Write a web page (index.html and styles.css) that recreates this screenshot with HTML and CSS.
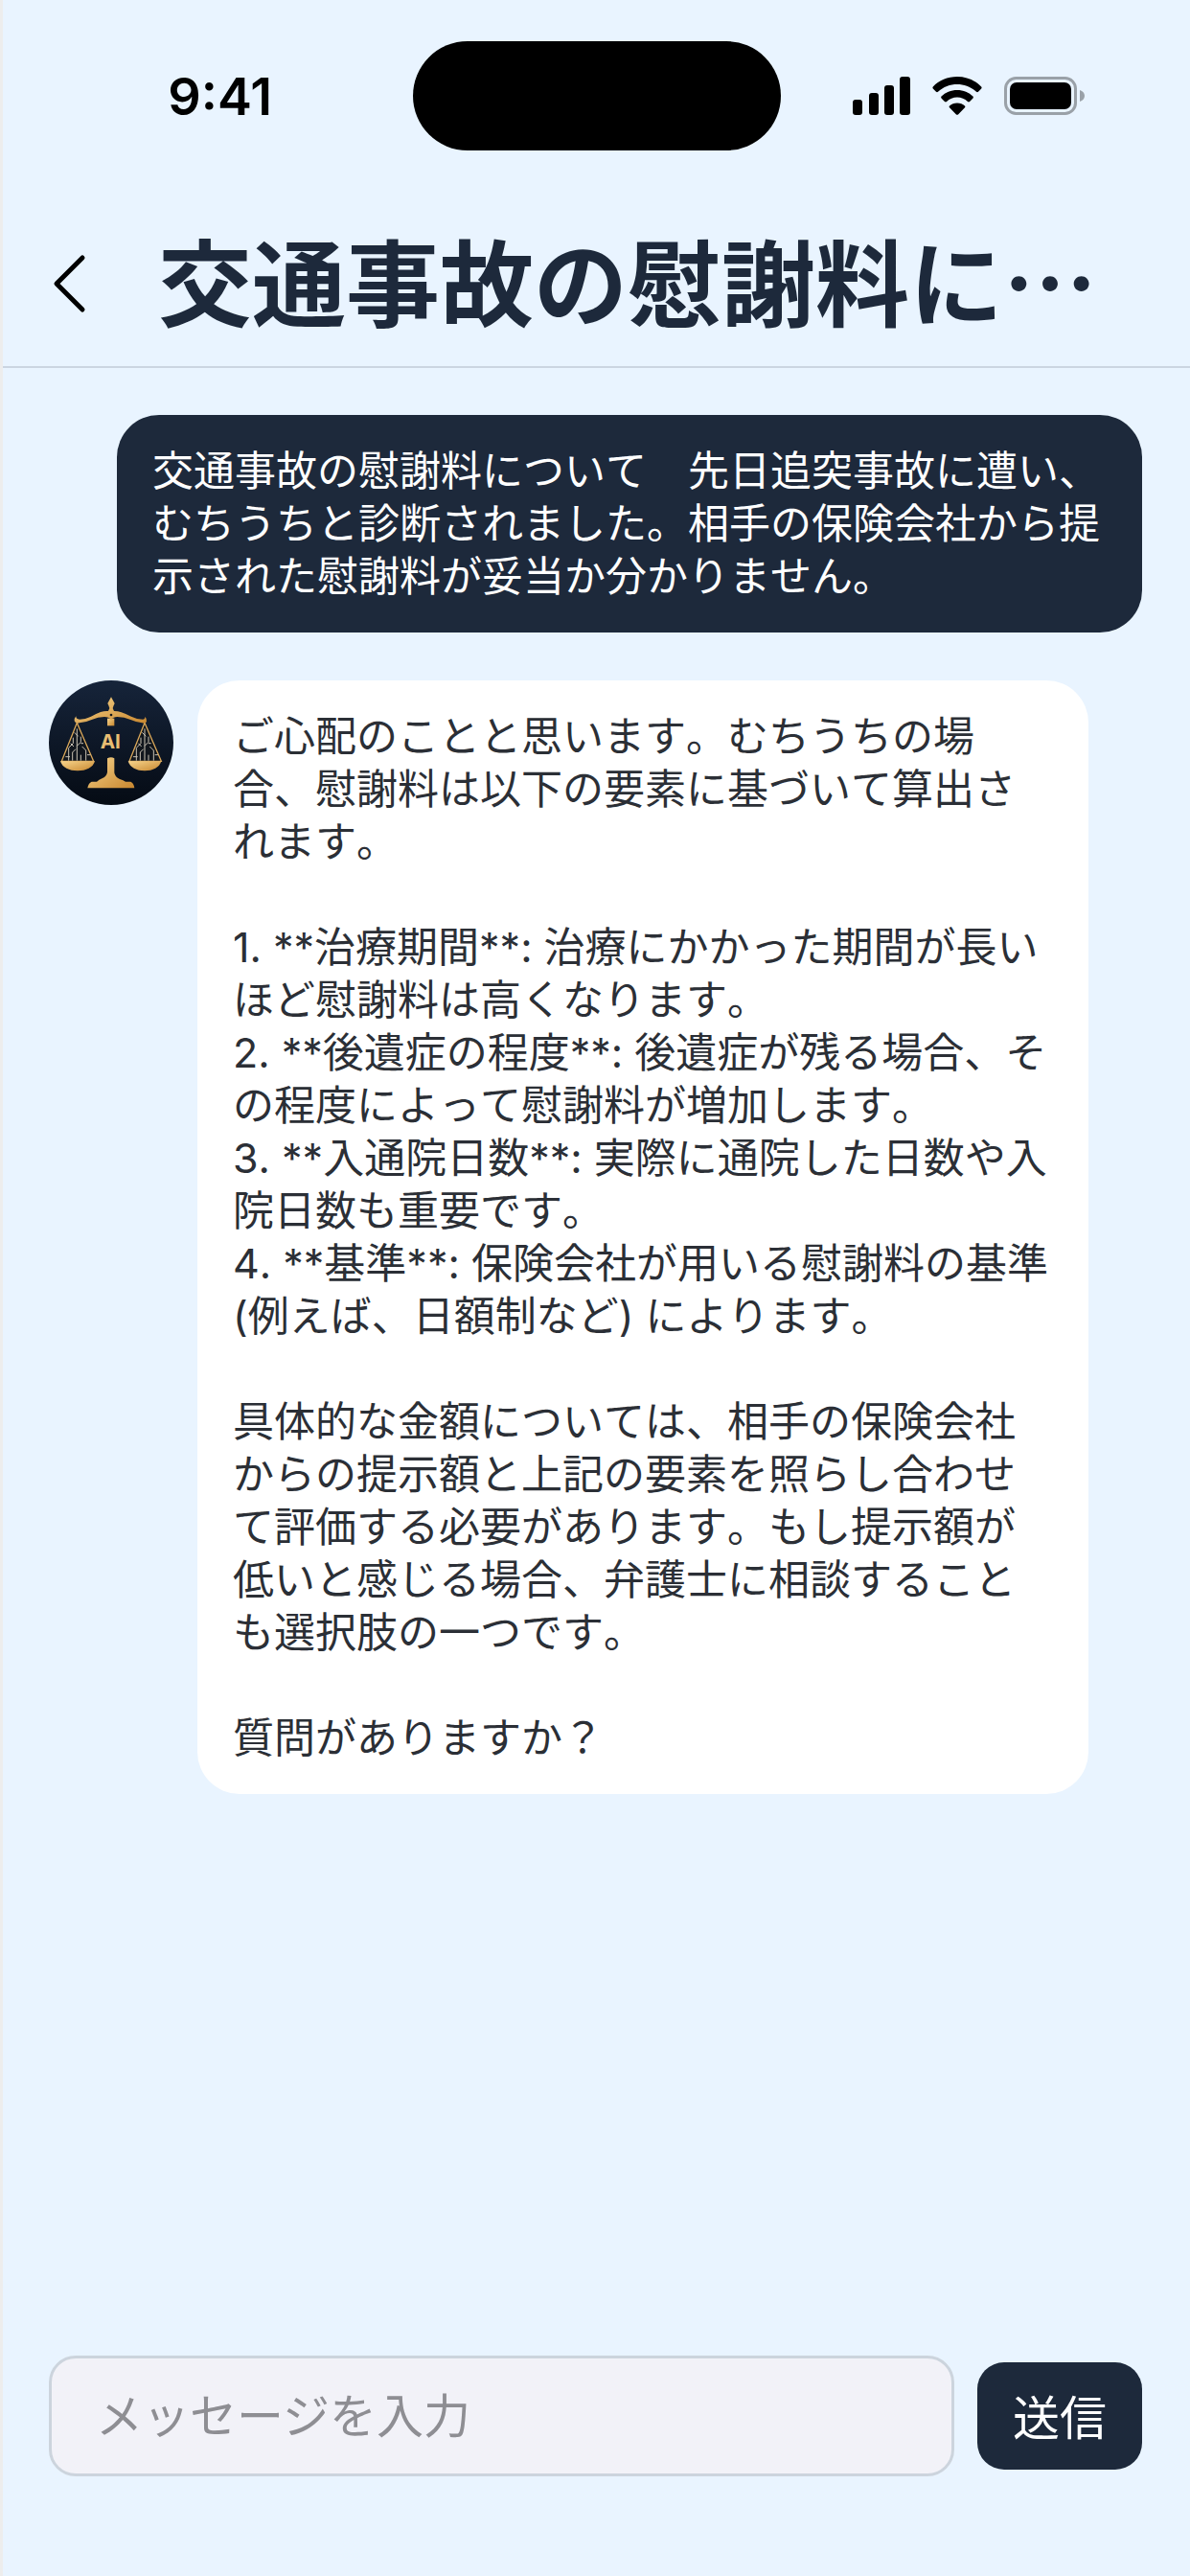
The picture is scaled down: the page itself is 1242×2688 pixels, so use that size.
FILE: index.html
```
<!DOCTYPE html>
<html lang="ja">
<head>
  <meta charset="UTF-8">
  <meta name="viewport" content="width=device-width, initial-scale=1.0">
  <title>交通事故の慰謝料について</title>
  <link rel="stylesheet" href="styles.css">
</head>
<body>
  <div class="app">
    <!-- Status bar -->
    <div class="status-bar">
      <div class="status-time">9:41</div>
      <div class="island"></div>
      <div class="status-icons">
        <svg class="icon-signal" viewBox="0 0 60 40" aria-hidden="true">
          <rect x="0" y="24" width="10" height="16" rx="3"/>
          <rect x="17" y="17" width="10" height="23" rx="3"/>
          <rect x="33" y="9" width="10" height="31" rx="3"/>
          <rect x="49" y="0" width="11" height="40" rx="3"/>
        </svg>
        <svg class="icon-wifi" viewBox="0 0 52 40" aria-hidden="true">
          <path d="M26 0C16 0 7 4 .8 10.400Q0 11.500 .8 12.500L4 15.800Q5 16.600 6 15.800C11.500 10.600 18.500 8 26 8S40.500 10.600 46 15.800Q47 16.600 48 15.800L51.200 12.500Q52 11.500 51.200 10.400C45 4 36 0 26 0Z"/>
          <path d="M26 14C19.500 14 13.700 16.500 9.500 20.600Q8.700 21.600 9.500 22.500L13 26Q14 26.800 15 26C18 23.200 21.800 21.600 26 21.600S34 23.200 37 26Q38 26.800 39 26L42.500 22.500Q43.300 21.600 42.500 20.600C38.300 16.500 32.500 14 26 14Z"/>
          <path d="M26 27.500C22.800 27.500 20 28.600 18 30.400Q17.200 31.400 18 32.200L25 39.400Q26 40.200 27 39.400L34 32.200Q34.800 31.400 34 30.400C32 28.600 29.200 27.500 26 27.500Z"/>
        </svg>
        <svg class="icon-battery" viewBox="0 0 86 40" aria-hidden="true">
          <rect x="1.500" y="1.500" width="73" height="37" rx="11" fill="none" stroke="#9aa1a8" stroke-width="3"/>
          <rect x="6" y="6" width="64" height="28" rx="7"/>
          <path d="M79 14C82 15 84 17 84 20S82 25 79 26Z" fill="#9aa1a8"/>
        </svg>
      </div>
    </div>

    <!-- Header -->
    <header class="header">
      <button class="back" aria-label="戻る">
        <svg viewBox="0 0 36 64" aria-hidden="true">
          <path d="M31 5L4 32L31 59"/>
        </svg>
      </button>
      <h1>交通事故の慰謝料に…</h1>
    </header>

    <!-- Messages -->
    <main class="messages">
      <div class="bubble bubble-user">交通事故の慰謝料について　先日追突事故に遭い、むちうちと診断されました。相手の保険会社から提示された慰謝料が妥当か分かりません。</div>

      <div class="row-ai">
        <svg class="avatar" viewBox="36 29 390 390" role="img" aria-label="AI">
          <defs>
            <linearGradient id="sky" x1="0" y1="0" x2="0" y2="1">
              <stop offset="0" stop-color="#16243a"/>
              <stop offset="1" stop-color="#050b14"/>
            </linearGradient>
            <linearGradient id="gold" x1="0" y1="0" x2="1" y2="1">
              <stop offset="0" stop-color="#f6d48c"/>
              <stop offset="1" stop-color="#c8872f"/>
            </linearGradient>
          </defs>
          <circle cx="231" cy="224" r="195" fill="url(#sky)"/>
          <!-- pans with circuit pattern -->
          <g fill="#11161d" stroke="#d9a75a" stroke-width="4">
            <path d="M124 162L76 282H176Z"/>
            <path d="M336 162L288 282H388Z"/>
          </g>
          <g fill="none" stroke="#c9c2b4" stroke-width="3">
            <path d="M124 180V280M112 208V226L98 240V280M136 205V222L124 234M140 236L152 248V280M110 280V254L120 244M136 280V262M88 268H102M116 192L128 204M104 226L114 236M144 226H136M156 262H166"/>
            <path d="M336 180V280M324 208V226L310 240V280M348 205V222L336 234M352 236L364 248V280M322 280V254L332 244M348 280V262M300 268H314M328 192L340 204M316 226L326 236M356 226H348M368 262H378"/>
          </g>
          <g fill="url(#gold)">
            <path d="M72 282H180C174 302 153 312 126 312S78 302 72 282Z"/>
            <path d="M284 282H388C382 302 362 312 336 312S290 302 284 282Z"/>
            <path d="M219 273Q231 266 241 273V318Q243 332 258 338Q270 342 276 346H292Q302 350 304 366H157Q160 350 170 346H186Q192 340 204 335Q217 329 219 316Z"/>
            <path d="M219 148H241V171H219Z"/>
            <path d="M231 81Q238 94 242 101Q238 108 236 116L240 125Q252 125 263 129Q280 135 294 142Q312 151 330 151Q338 150 337 142Q344 150 342 158Q338 166 328 162Q310 160 292 152Q272 143 250 143Q238 143 231 152Q224 143 210 143Q190 143 170 152Q150 161 132 162Q120 166 116 156Q115 148 121 141Q121 151 132 151Q150 151 168 142Q182 134 198 128Q210 124 222 125L226 116Q224 108 220 101Q225 92 231 81Z"/>
          </g>
          <circle cx="231" cy="137" r="4" fill="#11161d"/>
          <text class="avatar-text" x="229" y="242" text-anchor="middle">AI</text>
        </svg>
        <div class="bubble bubble-ai">ご心配のことと思います。むちうちの場合、慰謝料は以下の要素に基づいて算出されます。

1. **治療期間**: 治療にかかった期間が長いほど慰謝料は高くなります。
2. **後遺症の程度**: 後遺症が残る場合、その程度によって慰謝料が増加します。
3. **入通院日数**: 実際に通院した日数や入院日数も重要です。
4. **基準**: 保険会社が用いる慰謝料の基準 (例えば、日額制など) によります。

具体的な金額については、相手の保険会社からの提示額と上記の要素を照らし合わせて評価する必要があります。もし提示額が低いと感じる場合、弁護士に相談することも選択肢の一つです。

質問がありますか？</div>
      </div>
    </main>

    <!-- Message form -->
    <form class="composer">
      <input type="text" id="message" aria-label="メッセージ" placeholder="メッセージを入力">
      <button type="button" class="send">送信</button>
    </form>
  </div>
</body>
</html>
```
FILE: styles.css
```
* {
  box-sizing: border-box;
}
body {
  margin: 0;
  background: #e9f4ff;
  font-family: Inter, "Noto Sans CJK JP", sans-serif;
  color: #2b2f36;
}
.app {
  min-height: 100vh;
  display: flex;
  flex-direction: column;
  border-left: 3px solid #ededed;
}
svg {
  display: block;
}

/* Status bar */
.status-bar {
  display: grid;
  grid-template-columns: 1fr 384px 1fr;
  align-items: center;
  padding: 43px 0 42px;
}
.status-time {
  padding-left: 26px;
  text-align: center;
  font-size: 54px;
  font-weight: 600;
  color: #000;
}
.island {
  height: 114px;
  border-radius: 57px;
  background: #000;
}
.status-icons {
  display: flex;
  justify-content: flex-end;
  gap: 23px;
  padding-right: 108px;
}
.status-icons svg {
  height: 40px;
}

/* Header */
.header {
  display: flex;
  align-items: center;
  gap: 74px;
  height: 185px;
  padding: 10px 48px 0 52px;
  border-bottom: 2px solid #cbd5e1;
}
.back {
  padding: 0;
  border: 0;
  background: none;
  cursor: pointer;
}
.back svg {
  width: 36px;
  height: 64px;
  fill: none;
  stroke: #000;
  stroke-width: 5;
  stroke-linecap: round;
  stroke-linejoin: round;
}
h1 {
  margin: 0;
  padding-bottom: 12px;
  font-family: "Noto Sans CJK JP", sans-serif;
  font-size: 98px;
  font-weight: 700;
  line-height: 120px;
  white-space: nowrap;
  color: #1d293b;
}

/* Messages */
.messages {
  flex: 1;
  display: flex;
  flex-direction: column;
  gap: 50px;
  padding: 49px 50px 49px 48px;
}
.bubble {
  padding: 31px 37px;
  border-radius: 44px;
  font-size: 43px;
  font-kerning: none;
  line-height: 55px;
  text-spacing-trim: space-all;
  white-space: pre-line;
}
.bubble-user {
  align-self: flex-end;
  max-width: 1070px;
  background: #1d293b;
  color: #fff;
}
.row-ai {
  display: flex;
  align-items: flex-start;
  gap: 25px;
}
.avatar {
  flex: none;
  width: 130px;
  height: 130px;
}
.avatar-text {
  font-size: 62px;
  font-weight: 700;
  fill: #e8bd72;
}
.bubble-ai {
  max-width: 930px;
  background: #fff;
}

/* Message form */
.composer {
  display: flex;
  align-items: center;
  gap: 24px;
  padding: 0 50px 104px 48px;
}
.composer input {
  flex: 1;
  min-width: 0;
  height: 126px;
  padding: 0 46px;
  border: 3px solid #ccd4dd;
  border-radius: 28px;
  background: #f2f2f8;
  font-family: inherit;
  font-size: 49px;
  color: #2b2f36;
}
.composer input::placeholder {
  color: #8e8e93;
}
.send {
  height: 112px;
  padding: 0 37px 4px;
  border: 0;
  border-radius: 28px;
  background: #1d293b;
  color: #fff;
  font-family: inherit;
  font-size: 49px;
  cursor: pointer;
}
```
